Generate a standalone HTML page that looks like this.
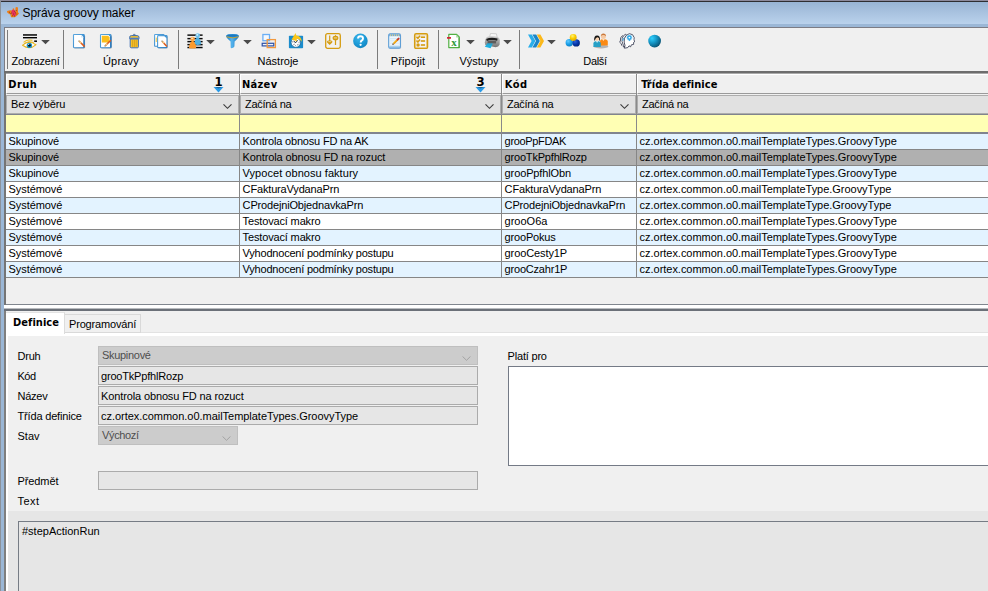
<!DOCTYPE html>
<html lang="cs">
<head>
<meta charset="utf-8">
<title>Správa groovy maker</title>
<style>
html,body{margin:0;padding:0;}
body{width:988px;height:591px;overflow:hidden;position:relative;background:#9bb7d6;font-family:"Liberation Sans",sans-serif;font-size:11px;color:#000;}
.abs{position:absolute;}
#frameTop{left:0;top:0;width:988px;height:2px;background:linear-gradient(#8c8a9c 0,#8c8a9c 50%,#2e2e32 50%,#2e2e32 100%);}
#frameLeft{left:0;top:0;width:1px;height:591px;background:#8c929b;}
#title{left:1px;top:2px;width:987px;height:22px;background:linear-gradient(#98b4d4 0,#bad2ec 100%);}
#titleLow{left:1px;top:24px;width:987px;height:3px;background:#9bb7d6;}
#titleText{left:22.5px;top:5px;font-size:12px;line-height:16px;white-space:nowrap;letter-spacing:-0.09px;}
#content{left:4px;top:27px;width:984px;height:564px;background:#f0f0f0;}
#toolbar{left:4px;top:27px;width:984px;height:44px;background:#f0f0f0;border-top:1px solid #7c7c84;border-left:1px solid #7c7c84;box-sizing:border-box;}
.tsep{position:absolute;top:30px;width:1px;height:39px;background:#7b7b7b;}
.tlabel{position:absolute;top:54px;height:14px;line-height:14px;text-align:center;white-space:nowrap;}
#tbBottom{left:4px;top:71px;width:984px;height:3px;background:linear-gradient(#6d6d6d 0,#6d6d6d 66.6%,#a9a9a9 66.6%,#a9a9a9 100%);}
/* table */
#tblLeft{left:4px;top:73px;width:2px;height:232px;background:#757575;}
.hcell{position:absolute;top:74px;height:18px;background:#f0f0f0;border-top:1px solid #fff;border-left:1px solid #fff;border-bottom:1px solid #9a9a9a;border-right:1px solid #8a8a8a;box-sizing:content-box;font-family:"DejaVu Sans Condensed","Liberation Sans",sans-serif;font-weight:bold;line-height:19px;white-space:nowrap;}
.hcell>span{position:absolute;left:2px;top:0;}
.sortn{font-family:"DejaVu Sans Condensed","Liberation Sans",sans-serif;font-weight:bold;font-size:13px;line-height:13px;}
.fcell{position:absolute;top:95px;height:17px;background:#e1e1e1;border:1px solid #adadad;line-height:16px;white-space:nowrap;}
.fcell>span{position:absolute;left:4px;top:0;}
.chev{position:absolute;width:9px;height:6px;}
.ycell{position:absolute;top:114px;height:17px;background:#ffffb4;border-top:1px solid #80848e;border-bottom:2px solid #80848e;}
.row{position:absolute;left:6px;width:982px;height:15px;border-bottom:1px solid #868686;line-height:15px;white-space:nowrap;}
.row i{position:absolute;top:0;height:15px;font-style:normal;border-right:1px solid #868686;padding-left:2.6px;box-sizing:border-box;overflow:hidden;}
.row .c1{left:0;width:234px;}
.row .c2{left:234px;width:262px;}
.row .c3{left:496px;width:135px;}
.row .c4{left:631px;width:351px;border-right:none;}
.r0{background:#e3f3ff;}
.r1{background:#ffffff;}
.rs{background:#b0b0b0;}
/* bottom */
.tabsel{left:6px;top:312px;width:58px;height:21px;background:#fff;border-top:1px solid #e3e3e3;border-right:1px solid #dcdcdc;font-family:"DejaVu Sans Condensed","Liberation Sans",sans-serif;font-weight:bold;line-height:14px;white-space:nowrap;}
.tabsel>span{position:absolute;left:7px;top:3px;letter-spacing:0.05px;}
.tabun{left:65px;top:314px;width:75px;height:17px;background:#f0f0f0;border:1px solid #d9d9d9;border-left:none;line-height:14px;white-space:nowrap;}
.tabun>span{position:absolute;left:4px;top:2px;}
.lbl{left:17.5px;height:14px;line-height:14px;white-space:nowrap;}
.fld{height:17px;background:#e6e6e6;border:1px solid #ababab;line-height:16px;white-space:nowrap;}
.fld>span{position:absolute;left:2px;top:1px;}
.cmb{height:17px;background:#cccccc;border:1px solid #bfbfbf;line-height:16px;white-space:nowrap;color:#4e4e4e;}
.cmb>span{position:absolute;left:3px;top:0;}

</style>
</head>
<body>

<svg width="0" height="0" style="position:absolute">
<defs>
<linearGradient id="gDoc" x1="0" y1="0" x2="1" y2="1"><stop offset="0" stop-color="#5aa7e0"/><stop offset="1" stop-color="#2f7fc0"/></linearGradient>
<linearGradient id="gPen" x1="0" y1="0" x2="1" y2="1"><stop offset="0" stop-color="#f7c66a"/><stop offset=".35" stop-color="#e8791e"/><stop offset="1" stop-color="#c4430f"/></linearGradient>
<radialGradient id="gSph" cx=".3" cy=".28" r=".8"><stop offset="0" stop-color="#2fd0ff"/><stop offset=".5" stop-color="#1391c0"/><stop offset="1" stop-color="#084e6e"/></radialGradient>
<radialGradient id="gHelp" cx=".4" cy=".3" r=".8"><stop offset="0" stop-color="#3db6ea"/><stop offset=".6" stop-color="#1a97d4"/><stop offset="1" stop-color="#147fb8"/></radialGradient>
<radialGradient id="gBY" cx=".4" cy=".3" r=".7"><stop offset="0" stop-color="#fff27a"/><stop offset=".5" stop-color="#fdd104"/><stop offset="1" stop-color="#e0a800"/></radialGradient>
<radialGradient id="gBL" cx=".35" cy=".3" r=".7"><stop offset="0" stop-color="#63cbff"/><stop offset=".6" stop-color="#179ee8"/><stop offset="1" stop-color="#0f82c8"/></radialGradient>
<radialGradient id="gBD" cx=".35" cy=".3" r=".7"><stop offset="0" stop-color="#2a62d8"/><stop offset=".6" stop-color="#0535a8"/><stop offset="1" stop-color="#03277e"/></radialGradient>
<linearGradient id="gFun" x1="0" y1="0" x2="1" y2="0"><stop offset="0" stop-color="#1d7fc6"/><stop offset=".45" stop-color="#55b4ee"/><stop offset="1" stop-color="#1a74ba"/></linearGradient>
<linearGradient id="gPrn" x1="0" y1="0" x2="0" y2="1"><stop offset="0" stop-color="#cfcfcf"/><stop offset="1" stop-color="#747474"/></linearGradient>
</defs>
</svg>

<div class="abs" id="title"></div>
<div class="abs" id="titleLow"></div>
<div class="abs" id="frameTop"></div>
<div class="abs" id="frameLeft"></div>
<svg class="abs" style="left:6px;top:5px" width="14" height="14" viewBox="0 0 14 14"><path d="M9.3,7.6 L9.5,2.6 Q10.6,1.4 11.9,2.4 L12,7.8 Z" fill="#ee7d14"/><path d="M6.5,6.6 L6.9,3.2 L8.1,3.6 L8.5,6.6 Z" fill="#ee7d14"/><path d="M1,5.9 L4.2,5.2 L7.4,6 L9.4,6.6 L12,7.2 L13,8.6 L11.2,10.4 L9,12.2 L5.2,12.2 L4.4,10.6 L5.4,9.4 L3.6,9.2 L1.4,7.8 Z" fill="#ee7d14"/><path d="M5.4,5.8 L6.8,4.6 L8.4,5 L9.6,7 L10,10 L8.4,11.2 L6.6,10.4 L5.6,8.4 Z" fill="#e6325c"/><g fill="#6b2a18" opacity=".75"><rect x="3" y="6.8" width=".9" height=".9"/><rect x="5" y="7.6" width=".9" height=".9"/><rect x="7" y="8.6" width=".9" height=".9"/><rect x="9" y="7.4" width=".9" height=".9"/><rect x="8.2" y="5.8" width=".9" height=".9"/><rect x="10.4" y="8.6" width=".9" height=".9"/><rect x="6" y="10.4" width=".9" height=".9"/><rect x="8" y="10.6" width=".9" height=".9"/><rect x="4" y="8.4" width=".9" height=".9"/><rect x="9.8" y="5" width=".9" height=".9"/></g></svg>
<div class="abs" id="titleText">Správa groovy maker</div>
<div class="abs" id="content"></div>
<div class="abs" id="toolbar"></div>
<div class="tsep" style="left:7px"></div>
<div class="tsep" style="left:63px"></div>
<div class="tsep" style="left:178px"></div>
<div class="tsep" style="left:377px"></div>
<div class="tsep" style="left:438px"></div>
<div class="tsep" style="left:519px"></div>
<div class="tlabel" style="left:8px;width:55px"><span style="letter-spacing:-0.15px">Zobrazení</span></div>
<div class="tlabel" style="left:64px;width:114px"><span style="letter-spacing:0.2px">Úpravy</span></div>
<div class="tlabel" style="left:179px;width:198px">Nástroje</div>
<div class="tlabel" style="left:378px;width:60px"><span style="letter-spacing:0.12px">Připojit</span></div>
<div class="tlabel" style="left:439px;width:80px">Výstupy</div>
<div class="tlabel" style="left:520px;width:150px"><span style="letter-spacing:-0.34px">Další</span></div>
<svg class="abs" style="left:22px;top:33px" width="16" height="16" viewBox="0 0 16 16"><rect x="1" y="1.1" width="14" height="1.7" fill="#222"/><rect x="1" y="4" width="14" height="1.4" fill="#000"/><rect x="12.2" y="7.4" width="2.8" height="1.6" fill="#111"/><path d="M1.6,9.4 Q5,6.2 10.4,7.4" fill="none" stroke="#ecc02c" stroke-width="1.1"/><path d="M2.2,10.6 Q6,7.6 11.8,9.4" fill="none" stroke="#e2ae14" stroke-width="1"/><path d="M0.6,12.2 Q7,6.6 13.8,11.8 Q7.4,17.4 0.6,12.2 Z" fill="#fff" stroke="#e6b41c" stroke-width="1.1"/><circle cx="7.4" cy="12.4" r="2.7" fill="#1f93c4"/><circle cx="7.4" cy="12.3" r="1.4" fill="#05141c"/><circle cx="6.7" cy="11.3" r=".6" fill="#fff"/></svg>
<svg class="abs" style="left:72px;top:33px" width="16" height="16" viewBox="0 0 16 16"><rect x="2.1" y="2.1" width="11" height="13.4" rx="1.2" fill="#6e6e6e" opacity=".45"/><rect x="1.5" y="1.5" width="10.7" height="13.2" rx="0.6" fill="#fff" stroke="url(#gDoc)" stroke-width="1.1"/><path d="M9,1.6 L12.1,4.6 L12.1,1.9 Q12.1,1.6 11.6,1.6 Z" fill="#3b93d6"/><rect x="11.4" y="3.4" width="1.3" height="11" fill="#2a78bc"/><path d="M9,1.8 L9,4.4 L11.8,4.4 Z" fill="#d3e9f8"/><line x1="7.3" y1="8.3" x2="12.6" y2="13.6" stroke="#dc5a1c" stroke-width="1.5" stroke-linecap="butt"/><line x1="7.3" y1="8.3" x2="8.783999999999999" y2="9.784" stroke="#f4cc84" stroke-width="1.4" stroke-linecap="round"/><circle cx="6.982" cy="7.982000000000001" r=".6" fill="#6b5a3a"/></svg>
<svg class="abs" style="left:99px;top:33px" width="16" height="16" viewBox="0 0 16 16"><rect x="2.1" y="2.1" width="10.8" height="13.4" rx="1.2" fill="#6e6e6e" opacity=".45"/><rect x="1.5" y="1.5" width="10.4" height="13.2" rx="0.6" fill="#fff" stroke="url(#gDoc)" stroke-width="1.1"/><path d="M2.8,2.8 L9.2,2.8 L10.6,4.4 L10.6,9.4 L2.8,9.4 Z" fill="#fbbf1c"/><path d="M9.4,1.8 L11.8,4.4 L11.8,2 Z" fill="#3b93d6"/><rect x="11.1" y="3.4" width="1.3" height="11" fill="#2a78bc"/><line x1="6.4" y1="12.6" x2="11.8" y2="7.2" stroke="#dc5a1c" stroke-width="1.5" stroke-linecap="butt"/><line x1="6.4" y1="12.6" x2="7.912000000000001" y2="11.088" stroke="#f4cc84" stroke-width="1.4" stroke-linecap="round"/><circle cx="6.0760000000000005" cy="12.924" r=".6" fill="#6b5a3a"/></svg>
<svg class="abs" style="left:127px;top:33px" width="16" height="16" viewBox="0 0 16 16"><path d="M5.6,2.8 L7.3,0.9 L9,2.8 Z" fill="#f6c22a" stroke="#3f6fb4" stroke-width=".9" stroke-linejoin="round"/><path d="M2.6,4.4 Q2.6,2.6 4.4,2.6 L10.2,2.6 Q12,2.6 12,4.4 L12,5.6 L2.6,5.6 Z" fill="#f6c22a" stroke="#3f6fb4" stroke-width="1"/><rect x="2.4" y="4.6" width="9.8" height="1.5" fill="#5a8acc"/><path d="M3.2,6 L11.4,6 L11.4,13.8 Q11.4,14.8 10.4,14.8 L4.2,14.8 Q3.2,14.8 3.2,13.8 Z" fill="#f7c12a" stroke="#3f6fb4" stroke-width="1"/><rect x="5.1" y="7" width="1" height="6.8" fill="#d9a31c"/><rect x="6.9" y="7" width="1" height="6.8" fill="#d9a31c"/><rect x="8.7" y="7" width="1" height="6.8" fill="#d9a31c"/></svg>
<svg class="abs" style="left:154px;top:33px" width="16" height="16" viewBox="0 0 16 16"><rect x="0.6" y="1.5" width="9.4" height="11.8" rx="0.6" fill="#fff" stroke="url(#gDoc)" stroke-width="1.1"/><rect x="1.7" y="4.6" width="1.4" height="4.4" fill="#f7d36a"/><rect x="4.2" y="3.1" width="9.6" height="12.4" rx="1.1" fill="#6e6e6e" opacity=".4"/><rect x="3.6" y="2.6" width="9.4" height="12" rx="0.6" fill="#fff" stroke="url(#gDoc)" stroke-width="1.1"/><path d="M10,2.8 L12.8,5.6 L12.8,3 Z" fill="#3b93d6"/><line x1="8.3" y1="8.4" x2="12.9" y2="13.4" stroke="#dc5a1c" stroke-width="1.5" stroke-linecap="butt"/><line x1="8.3" y1="8.4" x2="9.588000000000001" y2="9.8" stroke="#f4cc84" stroke-width="1.4" stroke-linecap="round"/><circle cx="8.024000000000001" cy="8.1" r=".6" fill="#6b5a3a"/></svg>
<svg class="abs" style="left:187px;top:33px" width="16" height="16" viewBox="0 0 16 16"><rect x="0.4" y="1.4" width="15.2" height="1.45" fill="#0a0a0a"/><rect x="0.4" y="4.9" width="15.2" height="1.45" fill="#0a0a0a"/><rect x="0.4" y="7.9" width="15.2" height="1.45" fill="#0a0a0a"/><rect x="0.4" y="10.9" width="15.2" height="1.45" fill="#0a0a0a"/><rect x="0.4" y="13.8" width="15.2" height="1.45" fill="#0a0a0a"/><path d="M10.7,3.4 L12.3,5.4 Q14.3,8 14.1,11.2 Q10.7,12.6 7.3,11.2 Q7.1,8 9.1,5.4 Z" fill="#4eb0e2"/><circle cx="10.7" cy="2.5" r="2.3" fill="#6ec2ee"/><circle cx="10.2" cy="1.9" r=".8" fill="#e4f5ff"/><path d="M5.6,7 L7.2,9 Q9.4,11.8 9.2,14.9 Q5.6,16 2,14.9 Q1.8,11.8 4,9 Z" fill="#fb9a2c"/><circle cx="5.6" cy="6" r="2.3" fill="#fca544"/><circle cx="5.1" cy="5.3" r=".8" fill="#fff0dc"/></svg>
<svg class="abs" style="left:225px;top:33px" width="16" height="16" viewBox="0 0 16 16"><path d="M1.1,3.2 Q1.1,1.1 7.5,1.1 Q13.9,1.1 13.9,3.2 Q13.9,4.6 9.6,8.4 L9.4,13.4 Q8.6,14.8 6.2,15.2 Q5.6,15 5.7,14 L5.6,8.4 Q1.1,4.6 1.1,3.2 Z" fill="url(#gFun)"/><ellipse cx="7.5" cy="3" rx="6.2" ry="1.7" fill="#2d95dc"/><ellipse cx="7.5" cy="2.7" rx="5.4" ry="1.1" fill="#1a78c0"/><path d="M1.5,3.8 Q7.5,6 13.5,3.8" fill="none" stroke="#d9a11e" stroke-width="0.9"/></svg>
<svg class="abs" style="left:261px;top:33px" width="16" height="16" viewBox="0 0 16 16"><rect x="1.9" y="1.5" width="6.6" height="6.2" fill="#f4f8fd" stroke="#6aaef5" stroke-width="1.3"/><rect x="1.2" y="10.3" width="11.6" height="2.6" fill="#eef2fa" stroke="#2b50a6" stroke-width="1.2"/><rect x="6.2" y="6.6" width="8.2" height="8" fill="none" stroke="#f2993e" stroke-width="1.3"/></svg>
<svg class="abs" style="left:288px;top:33px" width="16" height="16" viewBox="0 0 16 16"><rect x="0.9" y="2.8" width="14.2" height="12.4" rx="0.8" fill="#1b8ccc"/><circle cx="7.8" cy="9.6" r="4.7" fill="#fff" stroke="#1a5d90" stroke-width=".7"/><path d="M7.8,9.6 L5.6,8.2 M7.8,9.6 L9.6,7.4" stroke="#1d2b40" stroke-width="1" fill="none"/><path d="M5.4,11.8 L6.6,11.2 M9.2,12 L10.4,11.4 M4.2,8.8 L5.2,9 M10.6,9.4 L11.6,9.2 M7,13 L7.6,12.4" stroke="#334" stroke-width=".7"/><path d="M3.6,6.6 L7.6,0 L8.3,2.4 Q13.4,2.6 13.8,8.8 Q11.6,5.4 8.7,5.7 L9,8.2 Z" fill="#fbc518"/></svg>
<svg class="abs" style="left:325px;top:33px" width="16" height="16" viewBox="0 0 16 16"><rect x="0.7" y="0.7" width="14.6" height="14.6" rx="1.8" fill="#f7f3e8" fill-opacity=".4" stroke="#d59c10" stroke-width="1.3"/><line x1="4.7" y1="2.6" x2="4.7" y2="8" stroke="#d59c10" stroke-width="1.2"/><ellipse cx="4.7" cy="8.7" rx="2.8" ry="1.5" fill="#d59c10"/><path d="M2.2,9.4 L7.2,9.4 L4.7,12 Z" fill="#d59c10"/><rect x="3.2" y="8.4" width="3" height=".7" fill="#f3e3b4"/><line x1="10.5" y1="2.2" x2="10.5" y2="12" stroke="#d59c10" stroke-width="1.2"/><ellipse cx="10.5" cy="5" rx="2.9" ry="2.3" fill="#d59c10"/><rect x="8.9" y="4.5" width="3.2" height=".9" fill="#f3e3b4"/></svg>
<svg class="abs" style="left:352px;top:33px" width="16" height="16" viewBox="0 0 16 16"><circle cx="8.4" cy="7.9" r="7.3" fill="url(#gHelp)"/><path d="M6,5.6 Q6,3.2 8.5,3.2 Q11,3.2 11,5.4 Q11,6.8 9.6,7.6 Q8.7,8.2 8.7,9.4" fill="none" stroke="#fff" stroke-width="1.9"/><circle cx="8.6" cy="11.8" r="1.15" fill="#fff"/></svg>
<svg class="abs" style="left:387px;top:33px" width="16" height="16" viewBox="0 0 16 16"><rect x="2.3" y="1.6" width="11.8" height="14" rx="1.2" fill="#7a8aa0" opacity=".4"/><rect x="1.7" y="0.9" width="11.7" height="14.2" rx="1.3" fill="#f4fafe" stroke="#5a9bd4" stroke-width="1.1"/><rect x="2.2" y="1.2" width="10.7" height="2" fill="#6aa6d8"/><path d="M3.6,1.4 V3 M5.6,1.4 V3 M7.6,1.4 V3 M9.6,1.4 V3 M11.6,1.4 V3" stroke="#e8d48a" stroke-width=".9"/><path d="M3,5.4 H12.2 M3,7.2 H12.2 M3,9 H12.2 M3,10.8 H12.2 M3,12.6 H12.2" stroke="#c4e0f4" stroke-width=".7"/><rect x="2.2" y="13.4" width="10.8" height="1.4" fill="#7eb6e2"/><line x1="6.6" y1="10.6" x2="10.6" y2="6.6" stroke="#f4b41a" stroke-width="2" stroke-linecap="butt"/><line x1="6.9" y1="10.9" x2="10.9" y2="6.9" stroke="#e88a16" stroke-width=".7"/><line x1="10.6" y1="6.6" x2="11.6" y2="5.6" stroke="#c83a30" stroke-width="2" stroke-linecap="round"/><path d="M5.2,12 L5.8,10 L7.2,11.4 Z" fill="#6a5030"/></svg>
<svg class="abs" style="left:413px;top:33px" width="16" height="16" viewBox="0 0 16 16"><rect x="1.7" y="0.8" width="12.8" height="14.6" rx="1.4" fill="#f4f4fb" stroke="#d59c10" stroke-width="1.5"/><rect x="2.9" y="2" width="10.4" height="12.2" fill="none" stroke="#e0b548" stroke-width=".5"/><path d="M3.5,3.8 L4.9,5.3 L7,2.8" fill="none" stroke="#d59c10" stroke-width="1.5"/><path d="M3.5,7.6 L4.9,9.1 L7,6.6" fill="none" stroke="#d59c10" stroke-width="1.5"/><circle cx="5.1" cy="12" r="1.7" fill="#d59c10"/><rect x="7.8" y="3.4" width="4.3" height="1.6" fill="#d59c10"/><rect x="7.8" y="7.2" width="4.3" height="1.6" fill="#d59c10"/><rect x="7.8" y="11.2" width="4.3" height="1.6" fill="#d59c10"/></svg>
<svg class="abs" style="left:446px;top:33px" width="16" height="16" viewBox="0 0 16 16"><path d="M2.8,1.4 L10.6,1.4 L13.2,4 L13.2,14.6 L2.8,14.6 Z" fill="#fff" stroke="#52b043" stroke-width="1.2" stroke-linejoin="round"/><path d="M10.2,1.6 L10.2,4.4 L13,4.4 Z" fill="#a9dba0"/><rect x="12.4" y="4.4" width="1.3" height="10.6" fill="#3e9a34" opacity=".6"/><rect x="1" y="4.1" width="4" height="1.6" fill="#d4142a"/><text x="8" y="13.4" font-family="Liberation Serif,serif" font-weight="bold" font-size="11" text-anchor="middle" fill="#2f9a3c">x</text></svg>
<svg class="abs" style="left:484px;top:33px" width="16" height="16" viewBox="0 0 16 16"><path d="M5.6,3.6 L6.6,0.4 L12.4,0.8 L13.2,4.4 Z" fill="#f6f6f6" stroke="#b8b8b8" stroke-width=".6"/><path d="M1.4,6.2 Q2.6,3 6,3.2 L13,3.8 Q15.6,4.4 15.8,7.2 L15.6,11.8 Q14.6,14 11.6,14.2 L3,12.6 Q0.6,12 0.8,9.4 Z" fill="url(#gPrn)"/><path d="M2.2,6 Q7,3.8 13.6,5.6 L13.2,7.8 Q7,6.2 2.8,8 Z" fill="#1e1e1e"/><path d="M3.4,8.2 Q7.4,7 12.4,8.2 L11.8,10.4 L3.6,10.2 Z" fill="#5c5c5c"/><path d="M3.6,10 L8.8,10.4 L6.6,15.2 L0.8,13.8 Z" fill="#1fb0e0"/><path d="M3.6,10 L8.8,10.4 L8.2,11.6 L3,11.2 Z" fill="#3c7896" opacity=".6"/></svg>
<svg class="abs" style="left:528px;top:33px" width="16" height="16" viewBox="0 0 16 16"><path d="M0,1.5 L3.8,1.5 L7.4,8 L3.8,14.6 L0,14.6 L3.6,8 Z" fill="#2aaeea"/><path d="M4.4,1.5 L8.2,1.5 L11.8,8 L8.2,14.6 L4.4,14.6 L8,8 Z" fill="#1c86c8"/><path d="M8.8,1.5 L12.4,1.5 L16,8 L12.4,14.6 L8.8,14.6 L12.4,8 Z" fill="#fbb81a"/></svg>
<svg class="abs" style="left:565px;top:33px" width="16" height="16" viewBox="0 0 16 16"><circle cx="4.3" cy="9.7" r="3.7" fill="url(#gBL)"/><circle cx="11.2" cy="9.9" r="3.7" fill="url(#gBD)"/><circle cx="8.2" cy="4.4" r="3.45" fill="url(#gBY)"/></svg>
<svg class="abs" style="left:593px;top:33px" width="16" height="16" viewBox="0 0 16 16"><ellipse cx="8" cy="13.6" rx="7.4" ry="1.8" fill="#9a9a9a" opacity=".7"/><path d="M7,12.4 L7,8.6 Q7,6 10.2,6 Q14.8,6 14.8,8.6 L14.8,12.4 Z" fill="#fb8a14"/><path d="M9,6.2 L10.4,7.8 L11.8,6.2 Z" fill="#fff"/><circle cx="10.4" cy="3.4" r="2.5" fill="#f6c9a2"/><path d="M7.8,3.2 Q8,0.4 10.4,0.4 Q12.9,0.4 13,3.2 Q11.4,1.8 10.4,2 Q9,1.8 7.8,3.2 Z" fill="#c9783a"/><path d="M0.4,14 L0.4,10.6 Q0.4,8 4,8 Q7.8,8 7.8,10.6 L7.8,14 Z" fill="#27a0c6"/><path d="M2.8,8.2 L4.1,9.8 L5.4,8.2 Z" fill="#fff"/><circle cx="4.1" cy="5.6" r="2.3" fill="#f8d2b0"/><path d="M1.2,7.4 Q0.8,2.4 4.1,2.4 Q7.4,2.4 7,7.4 L6.2,7.4 Q6.6,4.6 4.8,4.2 Q2.4,4.4 2,7.4 Z" fill="#141414"/></svg>
<svg class="abs" style="left:619px;top:33px" width="16" height="16" viewBox="0 0 16 16"><path d="M2.6,12.6 L2.4,10.8 L0.6,9.2 L1.4,8 Q0.8,4.6 3.6,2.4" fill="#fff" stroke="#2b3048" stroke-width=".8" stroke-linejoin="round"/><path d="M4.4,14 L4.2,11.6 Q2.4,8.6 3.2,5.4 Q4,2.4 6.6,1.2 L8,3 L6,8 L6.4,13 Z" fill="#fff" stroke="#2b3048" stroke-width=".8" stroke-linejoin="round"/><path d="M4.4,5 L3.8,7.8 M6.4,3.4 L5.6,6.4" stroke="#39a9e6" stroke-width="1" fill="none"/><path d="M5.4,15.2 L6,12.4 Q4.6,9.2 5.4,5.6 Q6.4,1.6 10.4,0.7 Q14.4,0.8 15.2,4.6 L15,6.6 L15.6,8.8 L14.6,9.4 L14.6,11.4 L12.4,11.8 L11.6,13.8 L10,12.8 L8.8,14.6 Z" fill="#fff" stroke="#2b3048" stroke-width=".8" stroke-linejoin="round"/><circle cx="10.4" cy="4.6" r="3.1" fill="#8fd2f4" opacity=".55"/><circle cx="10.4" cy="4.6" r="2.3" fill="#28a6e6"/><path d="M10.4,8.2 L9.2,6.4 L11.6,6.4 Z" fill="#28a6e6"/><circle cx="10.4" cy="4.6" r=".95" fill="#fff"/></svg>
<svg class="abs" style="left:647px;top:33px" width="16" height="16" viewBox="0 0 16 16"><circle cx="7.6" cy="8.1" r="6.35" fill="url(#gSph)"/></svg>
<svg class="abs" style="left:40.5px;top:40px" width="9" height="5" viewBox="0 0 9 5"><polygon points="0.2,0 8.8,0 4.5,4.3" fill="#4b4b4b"/></svg>
<svg class="abs" style="left:205.5px;top:40px" width="9" height="5" viewBox="0 0 9 5"><polygon points="0.2,0 8.8,0 4.5,4.3" fill="#4b4b4b"/></svg>
<svg class="abs" style="left:242.5px;top:40px" width="9" height="5" viewBox="0 0 9 5"><polygon points="0.2,0 8.8,0 4.5,4.3" fill="#4b4b4b"/></svg>
<svg class="abs" style="left:306.5px;top:40px" width="9" height="5" viewBox="0 0 9 5"><polygon points="0.2,0 8.8,0 4.5,4.3" fill="#4b4b4b"/></svg>
<svg class="abs" style="left:465.5px;top:40px" width="9" height="5" viewBox="0 0 9 5"><polygon points="0.2,0 8.8,0 4.5,4.3" fill="#4b4b4b"/></svg>
<svg class="abs" style="left:502.5px;top:40px" width="9" height="5" viewBox="0 0 9 5"><polygon points="0.2,0 8.8,0 4.5,4.3" fill="#4b4b4b"/></svg>
<svg class="abs" style="left:546.5px;top:40px" width="9" height="5" viewBox="0 0 9 5"><polygon points="0.2,0 8.8,0 4.5,4.3" fill="#4b4b4b"/></svg>
<div class="abs" id="tbBottom"></div>
<div class="abs" id="tblLeft"></div>
<div class="abs" id="tblTopLine"></div>
<div class="hcell" style="left:6px;width:232px"><span style="left:1.3px;letter-spacing:0.4px">Druh</span></div>
<div class="hcell" style="left:240px;width:260px"><span style="left:1.0px;letter-spacing:0.3px">Název</span></div>
<div class="hcell" style="left:502px;width:133px"><span style="left:1.8px;letter-spacing:0.5px">Kód</span></div>
<div class="hcell" style="left:637px;width:352px"><span style="left:3.2px;letter-spacing:0.05px">Třída definice</span></div>
<div class="abs sortn" style="left:214.4px;top:75px">1</div><svg class="abs" style="left:213.4px;top:86.6px" width="11" height="6" viewBox="0 0 11 6"><polygon points="0.5,0 10.5,0 5.5,5.5" fill="#2a9be8"/><polygon points="2,0 9,0 5.5,1.6" fill="#14385e" opacity=".55"/></svg>
<div class="abs sortn" style="left:476.4px;top:75px">3</div><svg class="abs" style="left:475.4px;top:86.6px" width="11" height="6" viewBox="0 0 11 6"><polygon points="0.5,0 10.5,0 5.5,5.5" fill="#2a9be8"/><polygon points="2,0 9,0 5.5,1.6" fill="#14385e" opacity=".55"/></svg>
<div class="fcell" style="left:6px;width:231px"><span><span style="letter-spacing:-0.06px">Bez výběru</span></span><svg class="chev" style="right:6.5px;top:7.5px" viewBox="0 0 9 6"><polyline points="0.5,0.4 4.5,4.3 8.5,0.4" fill="none" stroke="#3c3c3c" stroke-width="1.15"/></svg></div>
<div class="fcell" style="left:240px;width:259px"><span><span style="letter-spacing:-0.28px">Začíná na</span></span><svg class="chev" style="right:6.5px;top:7.5px" viewBox="0 0 9 6"><polyline points="0.5,0.4 4.5,4.3 8.5,0.4" fill="none" stroke="#3c3c3c" stroke-width="1.15"/></svg></div>
<div class="fcell" style="left:502px;width:132px"><span><span style="letter-spacing:-0.28px">Začíná na</span></span><svg class="chev" style="right:6.5px;top:7.5px" viewBox="0 0 9 6"><polyline points="0.5,0.4 4.5,4.3 8.5,0.4" fill="none" stroke="#3c3c3c" stroke-width="1.15"/></svg></div>
<div class="fcell" style="left:637px;width:351px"><span><span style="letter-spacing:-0.28px">Začíná na</span></span></div>
<div class="ycell" style="left:6px;width:233px"></div>
<div class="ycell" style="left:240px;width:261px"></div>
<div class="ycell" style="left:502px;width:134px"></div>
<div class="ycell" style="left:637px;width:353px"></div>
<div class="row r0" style="top:134px"><i class="c1"><span style="letter-spacing:-0.1px">Skupinové</span></i><i class="c2"><span style="letter-spacing:-0.18px">Kontrola obnosu FD na AK</span></i><i class="c3"><span style="letter-spacing:-0.33px">grooPpFDAK</span></i><i class="c4"><span style="letter-spacing:-0.03px">cz.ortex.common.o0.mailTemplateTypes.GroovyType</span></i></div>
<div class="row rs" style="top:150px"><i class="c1"><span style="letter-spacing:-0.1px">Skupinové</span></i><i class="c2"><span style="letter-spacing:-0.125px">Kontrola obnosu FD na rozuct</span></i><i class="c3"><span style="letter-spacing:-0.19px">grooTkPpfhlRozp</span></i><i class="c4"><span style="letter-spacing:-0.03px">cz.ortex.common.o0.mailTemplateTypes.GroovyType</span></i></div>
<div class="row r0" style="top:166px"><i class="c1"><span style="letter-spacing:-0.1px">Skupinové</span></i><i class="c2"><span style="letter-spacing:0.045px">Vypocet obnosu faktury</span></i><i class="c3"><span style="letter-spacing:-0.12px">grooPpfhlObn</span></i><i class="c4"><span style="letter-spacing:-0.03px">cz.ortex.common.o0.mailTemplateTypes.GroovyType</span></i></div>
<div class="row r1" style="top:182px"><i class="c1"><span style="letter-spacing:-0.08px">Systémové</span></i><i class="c2"><span style="letter-spacing:-0.16px">CFakturaVydanaPrn</span></i><i class="c3"><span style="letter-spacing:-0.16px">CFakturaVydanaPrn</span></i><i class="c4"><span style="letter-spacing:-0.03px">cz.ortex.common.o0.mailTemplateType.GroovyType</span></i></div>
<div class="row r0" style="top:198px"><i class="c1"><span style="letter-spacing:-0.08px">Systémové</span></i><i class="c2"><span style="letter-spacing:-0.16px">CProdejniObjednavkaPrn</span></i><i class="c3"><span style="letter-spacing:-0.16px">CProdejniObjednavkaPrn</span></i><i class="c4"><span style="letter-spacing:-0.03px">cz.ortex.common.o0.mailTemplateType.GroovyType</span></i></div>
<div class="row r1" style="top:214px"><i class="c1"><span style="letter-spacing:-0.08px">Systémové</span></i><i class="c2"><span style="letter-spacing:-0.15px">Testovací makro</span></i><i class="c3">grooO6a</i><i class="c4"><span style="letter-spacing:-0.03px">cz.ortex.common.o0.mailTemplateTypes.GroovyType</span></i></div>
<div class="row r0" style="top:230px"><i class="c1"><span style="letter-spacing:-0.08px">Systémové</span></i><i class="c2"><span style="letter-spacing:-0.15px">Testovací makro</span></i><i class="c3"><span style="letter-spacing:-0.17px">grooPokus</span></i><i class="c4"><span style="letter-spacing:-0.03px">cz.ortex.common.o0.mailTemplateTypes.GroovyType</span></i></div>
<div class="row r1" style="top:246px"><i class="c1"><span style="letter-spacing:-0.08px">Systémové</span></i><i class="c2"><span style="letter-spacing:-0.21px">Vyhodnocení podmínky postupu</span></i><i class="c3"><span style="letter-spacing:-0.1px">grooCesty1P</span></i><i class="c4"><span style="letter-spacing:-0.03px">cz.ortex.common.o0.mailTemplateTypes.GroovyType</span></i></div>
<div class="row r0" style="top:262px"><i class="c1"><span style="letter-spacing:-0.08px">Systémové</span></i><i class="c2"><span style="letter-spacing:-0.21px">Vyhodnocení podmínky postupu</span></i><i class="c3"><span style="letter-spacing:-0.2px">grooCzahr1P</span></i><i class="c4"><span style="letter-spacing:-0.03px">cz.ortex.common.o0.mailTemplateTypes.GroovyType</span></i></div>
<div class="abs" style="left:239px;top:74px;width:1px;height:60px;background:#8a8a8a"></div>
<div class="abs" style="left:501px;top:74px;width:1px;height:60px;background:#8a8a8a"></div>
<div class="abs" style="left:636px;top:74px;width:1px;height:60px;background:#8a8a8a"></div>
<div class="abs" style="left:6px;top:304px;width:982px;height:1px;background:#80868e"></div>
<div class="abs" style="left:4px;top:305px;width:984px;height:3px;background:#fff"></div>
<div class="abs" style="left:4px;top:308px;width:984px;height:1px;background:#b9bcc0"></div>
<div class="abs" style="left:4px;top:309px;width:984px;height:2px;background:#6b7078"></div>
<div class="abs" style="left:4px;top:311px;width:2px;height:280px;background:#7f7f7f"></div>
<!-- tabbed pane -->
<div class="abs" style="left:6px;top:332px;width:982px;height:1px;background:#e2e2e2"></div>
<div class="abs" style="left:6px;top:333px;width:982px;height:3px;background:#fff"></div>
<div class="abs" style="left:6px;top:332px;width:2px;height:259px;background:#fff"></div>
<div class="abs tabsel"><span>Definice</span></div>
<div class="abs tabun"><span><span style="letter-spacing:-0.17px">Programování</span></span></div>
<div class="abs" style="left:8px;top:511px;width:980px;height:80px;background:#e6e6e6"></div>
<!-- labels -->
<div class="abs lbl" style="top:349px;letter-spacing:-0.2px">Druh</div>
<div class="abs lbl" style="top:369px;letter-spacing:-0.5px">Kód</div>
<div class="abs lbl" style="top:389px;letter-spacing:-0.25px">Název</div>
<div class="abs lbl" style="top:409px"><span style="letter-spacing:-0.17px">Třída definice</span></div>
<div class="abs lbl" style="top:429px">Stav</div>
<div class="abs lbl" style="top:474px;letter-spacing:-0.1px">Předmět</div>
<div class="abs lbl" style="top:494px;letter-spacing:0.5px">Text</div>
<div class="abs lbl" style="left:507.6px;top:349px;letter-spacing:-0.2px">Platí pro</div>
<!-- fields -->
<div class="abs cmb" style="left:98px;top:346px;width:378px"><span style="letter-spacing:-0.3px">Skupinové</span><svg class="chev" style="right:6.5px;top:8.5px" viewBox="0 0 9 6"><polyline points="0.5,0.4 4.5,4.3 8.5,0.4" fill="none" stroke="#a3a3a3" stroke-width="1"/></svg></div>
<div class="abs fld" style="left:98px;top:366px;width:378px"><span><span style="letter-spacing:-0.19px">grooTkPpfhlRozp</span></span></div>
<div class="abs fld" style="left:98px;top:386px;width:378px"><span><span style="letter-spacing:-0.125px">Kontrola obnosu FD na rozuct</span></span></div>
<div class="abs fld" style="left:98px;top:406px;width:378px"><span><span style="letter-spacing:-0.03px">cz.ortex.common.o0.mailTemplateTypes.GroovyType</span></span></div>
<div class="abs cmb" style="left:98px;top:426px;width:138px"><span style="letter-spacing:-0.35px">Výchozí</span><svg class="chev" style="right:6.5px;top:8.5px" viewBox="0 0 9 6"><polyline points="0.5,0.4 4.5,4.3 8.5,0.4" fill="none" stroke="#a3a3a3" stroke-width="1"/></svg></div>
<div class="abs fld" style="left:98px;top:471px;width:378px"></div>
<div class="abs" style="left:508px;top:366px;width:490px;height:98px;background:#fff;border:1px solid #747a86"></div>
<div class="abs" style="left:18px;top:521px;width:980px;height:80px;background:#e6e6e6;border:1px solid #767c85"><span style="position:absolute;left:3px;top:2px;line-height:14px;white-space:nowrap">#stepActionRun</span></div>

</body>
</html>
